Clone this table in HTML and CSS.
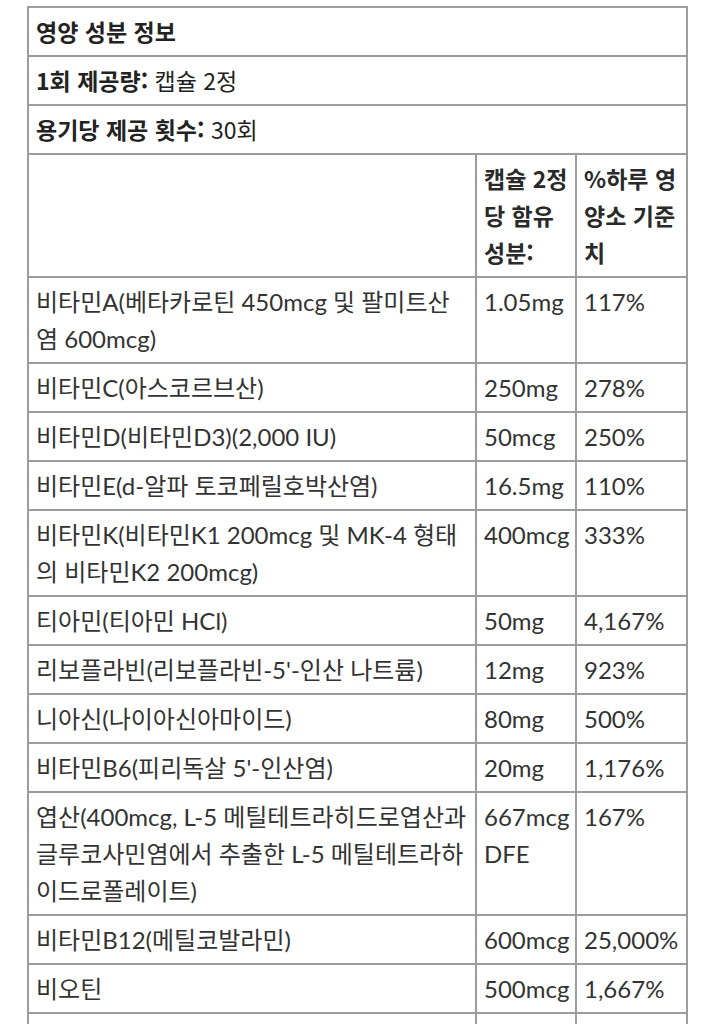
FILE: index.html
```html
<!DOCTYPE html>
<html lang="ko">
<head>
<meta charset="utf-8">
<title>영양 성분 정보</title>
<link rel="stylesheet" href="styles.css">
</head>
<body>
<table class="facts">
  <colgroup>
    <col class="c-name">
    <col class="c-amt">
    <col class="c-dv">
  </colgroup>
  <tbody>
    <tr><td colspan="3" class="top title">영양 성분 정보</td></tr>
    <tr><td colspan="3" class="top"><b>1회 제공량:</b> 캡슐 2정</td></tr>
    <tr><td colspan="3" class="top"><b>용기당 제공 횟수:</b> 30회</td></tr>
    <tr class="head"><td></td><td>캡슐 2정<br>당 함유<br>성분:</td><td>%하루 영<br>양소 기준<br>치</td></tr>
    <tr><td>비타민A(베타카로틴 450mcg 및 팔미트산<br>염 600mcg)</td><td>1.05mg</td><td>117%</td></tr>
    <tr><td>비타민C(아스코르브산)</td><td>250mg</td><td>278%</td></tr>
    <tr><td>비타민D(비타민D3)(2,000 IU)</td><td>50mcg</td><td>250%</td></tr>
    <tr><td>비타민E(d-알파 토코페릴호박산염)</td><td>16.5mg</td><td>110%</td></tr>
    <tr><td>비타민K(비타민K1 200mcg 및 MK-4 형태<br>의 비타민K2 200mcg)</td><td>400mcg</td><td>333%</td></tr>
    <tr><td>티아민(티아민 HCl)</td><td>50mg</td><td>4,167%</td></tr>
    <tr><td>리보플라빈(리보플라빈-5'-인산 나트륨)</td><td>12mg</td><td>923%</td></tr>
    <tr><td>니아신(나이아신아마이드)</td><td>80mg</td><td>500%</td></tr>
    <tr><td>비타민B6(피리독살 5'-인산염)</td><td>20mg</td><td>1,176%</td></tr>
    <tr><td>엽산(400mcg, L-5 메틸테트라히드로엽산과<br>글루코사민염에서 추출한 L-5 메틸테트라하<br>이드로폴레이트)</td><td>667mcg<br>DFE</td><td>167%</td></tr>
    <tr><td>비타민B12(메틸코발라민)</td><td>600mcg</td><td>25,000%</td></tr>
    <tr><td>비오틴</td><td>500mcg</td><td>1,667%</td></tr>
    <tr class="after"><td>판토텐산(D-판토텐산칼슘)</td><td>50mg</td><td>1,000%</td></tr>
  </tbody>
</table>
</body>
</html>
```
FILE: styles.css
```css
html, body {
  margin: 0;
  padding: 0;
  background: #ffffff;
}
body {
  padding: 6px 0 0 27px;
  font-family: Lato, "Noto Sans CJK KR", sans-serif;
  font-size: 24px;
  color: #333333;
}
.facts {
  border-collapse: collapse;
  width: 659px;
  table-layout: fixed;
}
.c-name { width: 448px; }
.c-amt { width: 100px; }
.c-dv { width: 111px; }
.facts td {
  border: 2px solid #9c9c9c;
  padding: 5px 2px 5px 7px;
  line-height: 37px;
  vertical-align: top;
  white-space: nowrap;
  overflow: hidden;
}
.facts .top {
  color: #222222;
  font-family: "Noto Sans CJK KR", sans-serif;
  font-size: 23px;
}
.facts .top b,
.facts .title {
  font-weight: 700;
}
.facts .head td {
  font-family: "Noto Sans CJK KR", sans-serif;
  font-weight: 700;
  font-size: 23px;
  color: #2a2a2a;
}
.facts .after td {
  padding-top: 24px;
}
```
